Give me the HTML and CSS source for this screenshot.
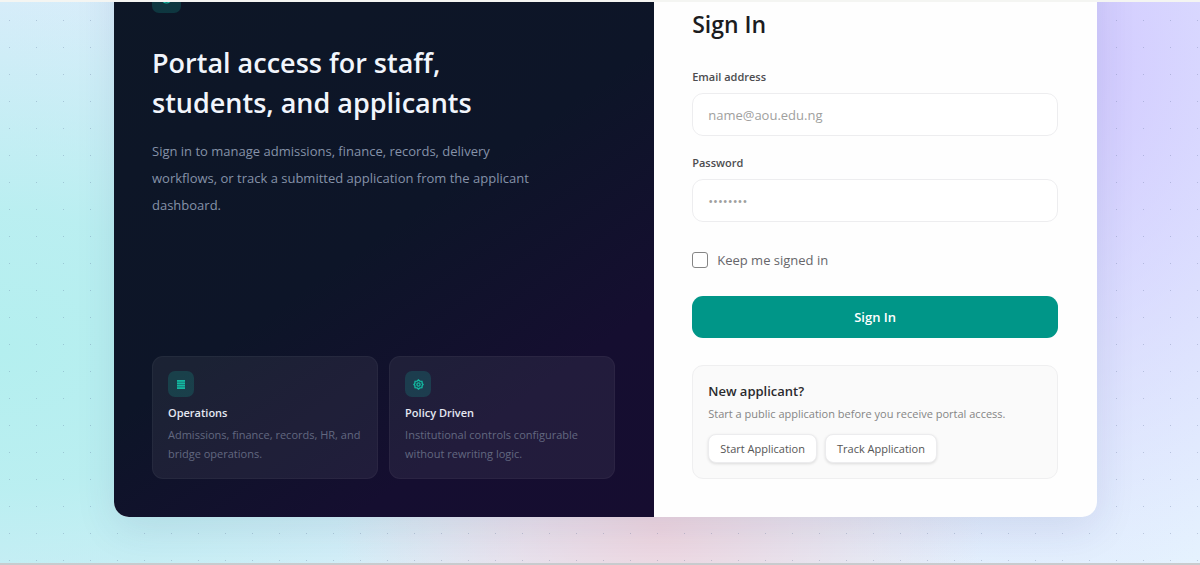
FILE: index.html
```html
<!DOCTYPE html>
<html lang="en">
  <head>
    <meta charset="UTF-8">
    <meta name="viewport" content="width=device-width, initial-scale=1">
    <title>Portal Sign In</title>
    <link rel="stylesheet" href="styles.css">
  </head>

  <body>
    <main class="page">
      <div class="card">

        <section class="intro">
          <div class="mark">
            <svg viewBox="0 0 24 24" width="13" height="13"><path d="M3 9l9-5 9 5-9 5zM6 12v6c4 3 8 3 12 0v-6"/></svg>
          </div>
          <h1>Portal access for staff, students, and applicants</h1>
          <p class="lead">Sign in to manage admissions, finance, records, delivery workflows, or track a submitted application from the applicant dashboard.</p>

          <div class="features">
            <div class="feature">
              <div class="tile">
                <svg viewBox="0 0 10 10" width="10" height="10">
                  <rect class="fill" x="1" y="1" width="8" height="9"/>
                  <path class="gap" d="M1 3.2h8M1 5.5h8M1 7.8h8"/>
                </svg>
              </div>
              <h2>Operations</h2>
              <p>Admissions, finance, records, HR, and bridge operations.</p>
            </div>
            <div class="feature">
              <div class="tile">
                <svg viewBox="0 0 24 24" width="11" height="11">
                  <path class="bold" d="M12 2l3 2.500 4.500.5.500 4.500L22 12l-2 2.500-.5 4.500-4.500.5L12 22l-3-2.500-4.500-.5L4 14.500 2 12l2-2.500.5-4.500L9 4.500z"/>
                  <circle class="bold" cx="12" cy="12" r="3.500"/>
                </svg>
              </div>
              <h2>Policy Driven</h2>
              <p>Institutional controls configurable without rewriting logic.</p>
            </div>
          </div>
        </section>

        <section class="login">
          <h2 class="title">Sign In</h2>
          <form>
            <label class="label" for="email">Email address</label>
            <input class="field" type="email" id="email" placeholder="name@aou.edu.ng">

            <label class="label" for="password">Password</label>
            <input class="field" type="password" id="password" placeholder="••••••••">

            <div class="remember">
              <input type="checkbox" id="remember">
              <label for="remember">Keep me signed in</label>
            </div>

            <button class="submit" type="submit">Sign In</button>
          </form>

          <div class="applicant">
            <h3>New applicant?</h3>
            <p>Start a public application before you receive portal access.</p>
            <div class="links">
              <a href="#start">Start Application</a>
              <a href="#track">Track Application</a>
            </div>
          </div>
        </section>

      </div>
    </main>
  </body>
</html>
```

FILE: styles.css
```css
* {
  box-sizing: border-box;
}
body {
  margin: 0;
  font-family: "Open Sans", "Noto Sans", sans-serif;
  font-size: 13px;
}
h1, h2, h3, p {
  margin: 0;
}

/* the card sits at the bottom of the page */
.page {
  display: flex;
  justify-content: center;
  align-items: flex-end;
  height: 100vh;
  overflow: hidden;
  padding: 0 24px 46px 35px;
  border-top: 2px solid #f4f5f2;
  border-bottom: 2px solid #c8cbce;
  background:
    radial-gradient(circle, rgba(90, 110, 150, 0.3) 0, transparent 1px) -4px 5px / 27px 27px,
    radial-gradient(ellipse 27% 40% at 55% 94%, #eed6e0 0%, rgba(238, 214, 224, 0) 100%),
    radial-gradient(ellipse 50% 70% at 0% 62%, #b4efef 0%, rgba(180, 239, 239, 0.85) 35%, rgba(180, 239, 239, 0) 100%),
    radial-gradient(ellipse 36% 100% at 88% 10%, #d1c8ff 0%, rgba(209, 200, 255, 0) 100%),
    linear-gradient(90deg, #dcecfb 0%, #e6f4fe 100%);
}
.card {
  display: grid;
  grid-template-columns: 122fr 100fr;
  flex: 0 0 auto;
  width: 100%;
  max-width: 983px;
  min-height: 571px;
  border-radius: 15px;
  overflow: hidden;
  background: #fefefe;
  box-shadow: 0 12px 40px rgba(40, 50, 110, 0.1);
}

/* left side */
.intro {
  display: flex;
  flex-direction: column;
  padding: 38px 39px 38px 38px;
  background: linear-gradient(145deg, #0d1726 0%, #0d1528 50%, #150e30 78%, #160d30 100%);
}
.mark, .tile {
  display: flex;
  align-items: center;
  justify-content: center;
  border-radius: 7px;
  background: rgba(20, 184, 166, 0.2);
}
.mark {
  flex: none;
  width: 29px;
  height: 29px;
}
.mark svg, .tile svg {
  fill: none;
  stroke: #14b8a0;
  stroke-width: 2;
}
.tile .fill {
  fill: #14b8a0;
  stroke: none;
}
.tile .gap {
  stroke: #167d78;
  stroke-width: 1;
}
.tile .bold {
  stroke-width: 3;
}
.intro h1 {
  max-width: 380px;
  margin-top: 30px;
  font-size: 27px;
  font-weight: 600;
  line-height: 40px;
  color: #f1f5fc;
}
.lead {
  max-width: 380px;
  margin-top: 15px;
  font-size: 13px;
  line-height: 27px;
  color: #8592a8;
}
.features {
  display: grid;
  grid-template-columns: 1fr 1fr;
  gap: 11px;
  margin-top: auto;
}
.feature {
  padding: 14px 15px 15px;
  border: 1px solid rgba(255, 255, 255, 0.04);
  border-radius: 11px;
  background: rgba(255, 255, 255, 0.06);
}
.tile {
  width: 26px;
  height: 26px;
}
.feature h2 {
  margin-top: 6px;
  font-size: 11px;
  font-weight: 600;
  line-height: 20px;
  color: #e5e8f2;
}
.feature p {
  margin-top: 2px;
  font-size: 11px;
  line-height: 19px;
  color: #626880;
}

/* right side */
.login {
  display: flex;
  flex-direction: column;
  justify-content: flex-end;
  padding: 38px 39px 38px 38px;
}
.title {
  font-size: 23px;
  font-weight: 600;
  line-height: 32px;
  color: #1c1c1e;
}
form {
  display: flex;
  flex-direction: column;
  margin-top: 27px;
}
.label {
  margin-bottom: 6px;
  font-size: 11px;
  font-weight: 600;
  line-height: 20px;
  color: #4c4c4f;
}
.field {
  height: 43px;
  margin: 0 0 17px;
  padding: 0 15px;
  border: 1px solid #ededef;
  border-radius: 11px;
  background: #fff;
  font-family: inherit;
  font-size: 13px;
  color: #333;
}
.field::placeholder {
  color: #a0a09e;
}
.remember {
  display: flex;
  align-items: center;
  gap: 9px;
  margin: 11px 0 26px;
  font-size: 13px;
  line-height: 20px;
  color: #66666a;
}
.remember input {
  appearance: none;
  width: 16px;
  height: 16px;
  margin: 0;
  border: 1px solid #858585;
  border-radius: 3px;
  background: #fff;
}
.remember input:checked {
  background: #009688;
}
.submit {
  height: 42px;
  border: 0;
  border-radius: 11px;
  background: #009688;
  font-family: inherit;
  font-size: 13px;
  font-weight: 600;
  color: #fff;
  cursor: pointer;
}
.applicant {
  margin-top: 27px;
  padding: 14px 15px 15px;
  border: 1px solid #efeff0;
  border-radius: 11px;
  background: #fafafa;
}
.applicant h3 {
  font-size: 13px;
  font-weight: 600;
  line-height: 22px;
  color: #2a2a2d;
}
.applicant p {
  margin-top: 2px;
  font-size: 11px;
  line-height: 20px;
  color: #858585;
}
.links {
  display: flex;
  gap: 8px;
  margin-top: 10px;
}
.links a {
  padding: 0 11px;
  border: 1px solid #ececee;
  border-radius: 8px;
  background: #fff;
  box-shadow: 0 1px 3px rgba(0, 0, 0, 0.12);
  font-size: 11px;
  line-height: 27px;
  color: #555;
  text-decoration: none;
}
```
